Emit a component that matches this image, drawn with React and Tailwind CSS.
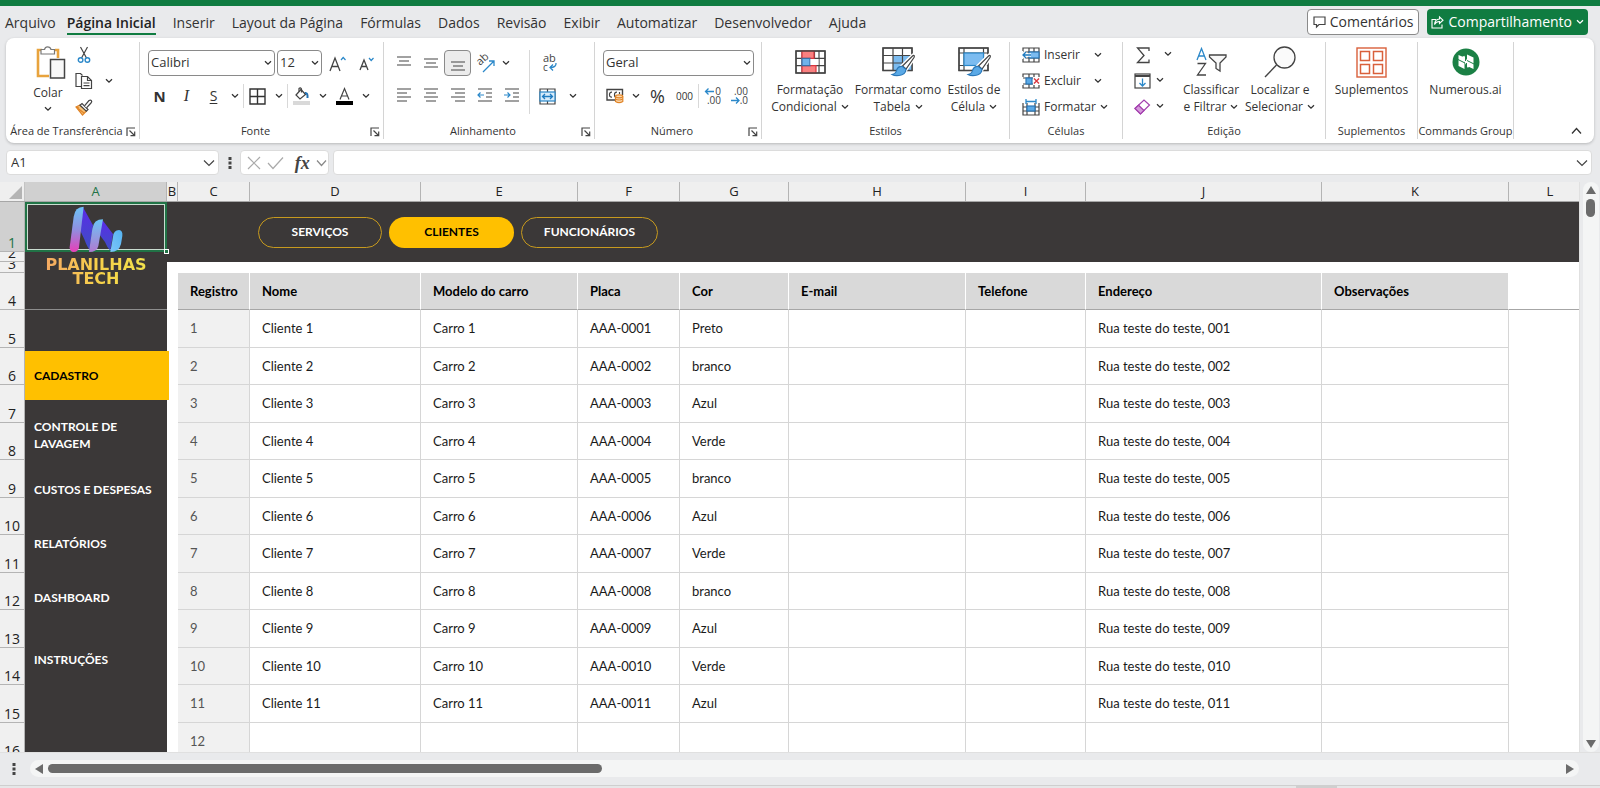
import React from "react";

const Svg = ({ w, h, vb, className = "", children }) => (
  <svg
    width={w}
    height={h}
    viewBox={vb || `0 0 ${w} ${h}`}
    fill="none"
    stroke="#444"
    strokeWidth="1.2"
    aria-hidden="true"
    className={"shrink-0 overflow-visible " + className}
  >
    {children}
  </svg>
);

const Chevron = ({ className = "" }) => (
  <Svg w={8} h={6} className={className}>
    <path d="M1 1.2 4 4.2 7 1.2" stroke="currentColor" strokeWidth="1.3" />
  </Svg>
);

const ChevronButton = ({ label, className = "" }) => (
  <button aria-label={label} className={"flex h-6 w-4 items-center justify-center " + className}>
    <Chevron />
  </button>
);

const Tool = ({ label, className = "", children }) => (
  <button aria-label={label} className={"flex h-[26px] w-[27px] shrink-0 items-center justify-center " + className}>
    {children}
  </button>
);

const Separator = ({ className = "h-6" }) => <span className={"w-px shrink-0 bg-[#d8d8d8] " + className} />;

/* ---------- icons ---------- */

const PasteIcon = () => (
  <Svg w={36} h={34}>
    <g transform="translate(6 0)">
      <path d="M6 4H2V30H13M19 4H22V12" stroke="#e8a33d" strokeWidth="2.6" />
      <path d="M5 8V3.500H8.500C9 1.500 10.200.8 11.500.8S14.500 1.500 15 3.500H18.500V8Z" fill="#fff" stroke="#777" />
      <rect x="14.500" y="13.500" width="14" height="18.500" fill="#f8f8f8" stroke="#444" strokeWidth="1.500" />
    </g>
  </Svg>
);

const CutIcon = () => (
  <Svg w={14} h={18}>
    <path d="M3.500 1 9.500 12M10.500 1 4.500 12" />
    <circle cx="3.600" cy="14" r="2.300" stroke="#2b88c9" strokeWidth="1.400" />
    <circle cx="10.400" cy="14" r="2.300" stroke="#2b88c9" strokeWidth="1.400" />
  </Svg>
);

const CopyIcon = () => (
  <Svg w={18} h={18}>
    <path d="M6 14.500H1V1.500H5.500L7.500 3.500" />
    <path d="M6.500 4.500H12.500L16.500 8.500V16.500H6.500Z" fill="#fff" />
    <path d="M12.500 4.500V8.500H16.500M8.500 11H14.500M8.500 13.700H14.500" />
  </Svg>
);

const BrushIcon = () => (
  <Svg w={18} h={17}>
    <path d="M1 8 5 6 11.500 12 7.500 16Z" fill="#f6c27a" stroke="#e08427" />
    <path d="M3 9.500 9 14M1 8l3 1" stroke="#e08427" />
    <path d="M5 6.200 7 4.500 13 10.500 11.300 12.200Z" fill="#fff" stroke="#444" />
    <path d="M9.500 6.800 14 1.500Q15.500.5 16.400 1.600T16 4L11.500 8.800" fill="#fff" stroke="#444" />
  </Svg>
);

const BordersIcon = () => (
  <Svg w={17} h={17}>
    <path d="M1 1H16V16H1ZM8.500 1V16M1 8.500H16" stroke="#333" strokeWidth="1.400" />
  </Svg>
);

const FillIcon = () => (
  <Svg w={17} h={18}>
    <path d="M3 8 8 2.500 12.500 7.500 7 12Z" />
    <path d="M6 4.500V1.500Q7.500 0 8.500 2V5.500" />
    <path d="M12 6Q15 5.500 14.500 11" stroke="#1f6fb2" strokeWidth="2" />
    <rect x="0" y="14" width="17" height="4" fill="#d9d9d9" stroke="none" />
  </Svg>
);

const HLines = ({ rows, stroke = "#444", children }) => (
  <Svg w={16} h={18}>
    {rows.map(([x1, x2, y]) => (
      <path key={y} d={`M${x1} ${y}H${x2}`} stroke={stroke} strokeWidth="1.200" />
    ))}
    {children}
  </Svg>
);

const OrientationIcon = () => (
  <Svg w={18} h={19}>
    <text x="0" y="0" fontSize="11" fontFamily="Open Sans, sans-serif" fill="#444" stroke="none" transform="translate(4 12) rotate(-42)">
      ab
    </text>
    <path d="M7 18 17.500 7.500M13 7H18V12" stroke="#2b88c9" strokeWidth="1.300" />
  </Svg>
);

const WrapIcon = () => (
  <Svg w={16} h={18}>
    <text x="1" y="8" fontSize="11" fontFamily="Open Sans, sans-serif" fill="#444" stroke="none">ab</text>
    <text x="1" y="16.500" fontSize="10" fontFamily="Open Sans, sans-serif" fill="#444" stroke="none">c</text>
    <path d="M14 9Q14.500 13.500 8 13.500M11 10.500 8 13.500 11 16.500" stroke="#2b88c9" strokeWidth="1.300" />
  </Svg>
);

const MergeIcon = () => (
  <Svg w={17} h={17}>
    <path d="M1 1H16V16H1ZM8.500 1V4M8.500 13V16" />
    <rect x="1" y="4" width="15" height="9" fill="#d8ecfa" stroke="#2b88c9" />
    <path d="M3.500 8.500H13.500M6 6 3.500 8.500 6 11M11 6 13.500 8.500 11 11" stroke="#1f7bc0" strokeWidth="1.300" />
  </Svg>
);

const CurrencyIcon = () => (
  <Svg w={18} h={16}>
    <path d="M10 12H1V1.500H16.500V7" strokeWidth="1.400" />
    <path d="M6 4.200Q3.500 4 3.500 6.700T6 9.200M11 4.200Q8.500 4 8.500 6.700T10 9.200M13.500 4V6" />
    <path d="M9.500 8.500V13.500Q13 15.800 16.800 13.500V8.500" fill="#fbd9b0" stroke="#e08427" />
    <ellipse cx="13.150" cy="8.300" rx="3.650" ry="1.500" fill="#fbd9b0" stroke="#e08427" />
    <path d="M9.500 11Q13 13 16.800 11" stroke="#e08427" />
  </Svg>
);

const DecimalIcon = ({ more }) => (
  <Svg w={17} h={18}>
    <text x="17" y="8" textAnchor="end" fontSize="10" fontFamily="Open Sans, sans-serif" fill="#444" stroke="none">
      {more ? "0" : ".00"}
    </text>
    <text x="17" y="17" textAnchor="end" fontSize="10" fontFamily="Open Sans, sans-serif" fill="#444" stroke="none">
      {more ? ".00" : ".0"}
    </text>
    {more ? (
      <path d="M10 4.500H1.500M4.500 1.500 1.500 4.500 4.500 7.500" stroke="#2b88c9" strokeWidth="1.300" />
    ) : (
      <path d="M0 13.500H8M5 10.500 8 13.500 5 16.500" stroke="#2b88c9" strokeWidth="1.300" />
    )}
  </Svg>
);

const ConditionalIcon = () => (
  <Svg w={31} h={24}>
    <rect x="1" y="1" width="29" height="22" fill="#fff" />
    <path d="M1 8.300H30M1 15.700H30M7 1V23M24 1V23M19.500 1V23" />
    <path d="M7 1H19V8.300H7ZM7 15.700H21V23H7Z" fill="#f98080" stroke="#d9363e" />
    <path d="M7 8.300H15V15.700H7Z" fill="#6fb3ea" stroke="#3b6fa5" />
    <rect x="15.500" y="9" width="8" height="6" fill="#fff" stroke="none" />
    <rect x="1" y="1" width="29" height="22" strokeWidth="1.400" />
  </Svg>
);

const PaintBrush = () => (
  <g>
    <path d="M31 8.500Q33 8 32 10.500L24 22 20.500 19Z" fill="#fff" stroke="#fff" strokeWidth="4" />
    <path d="M31 8.500Q33 8 32 10.500L24 22 20.500 19Z" fill="#fff" stroke="#444" />
    <path d="M20.500 19.500 24 22.300Q23.500 28 17 28.500 12.500 29 10 27.500 14 26.500 14.500 23.500 16 19 20.500 19.500Z" fill="#5aa9e6" stroke="#2b78b8" />
  </g>
);

const TableStyleIcon = () => (
  <Svg w={33} h={30}>
    <rect x="1" y="1" width="29" height="22.500" fill="#fff" />
    <path d="M11 8.500H30V23.500H11Z" fill="#7cbcf0" stroke="none" />
    <path d="M1 8.500H30M1 16H30M11 1V23.500M20.500 1V23.500" />
    <rect x="1" y="1" width="29" height="22.500" strokeWidth="1.400" />
    <PaintBrush />
  </Svg>
);

const CellStyleIcon = () => (
  <Svg w={33} h={30}>
    <rect x="1" y="1" width="29" height="22.500" fill="#fff" />
    <path d="M1 6H30M1 18.500H30M6 1V23.500M25.500 1V23.500" />
    <rect x="6" y="6" width="19.500" height="12.500" fill="#7cbcf0" stroke="#2b88c9" />
    <rect x="1" y="1" width="29" height="22.500" strokeWidth="1.400" />
    <PaintBrush />
  </Svg>
);

const InsertCellsIcon = () => (
  <Svg w={18} h={16}>
    <path d="M1 4V1H17V15H1V12M7 1V15M12 1V15M1 5H17M1 11H17" />
    <rect x="7" y="5" width="10" height="6" fill="#7cbcf0" stroke="#2b78b8" />
    <path d="M9 8H1M4 5 1 8 4 11" stroke="#fff" strokeWidth="3.500" />
    <path d="M9 8H1M4 5 1 8 4 11" stroke="#1f7bc0" strokeWidth="1.300" />
  </Svg>
);

const DeleteCellsIcon = () => (
  <Svg w={18} h={16}>
    <path d="M1 4V1H17V4M1 12V15H17V12M7 1V15M12 1V4M12 12V15M1 5H11M1 11H11" />
    <rect x="4" y="5" width="6" height="6" fill="#5aa9e6" stroke="#2b78b8" />
    <path d="M12 5.500 17 10.500M17 5.500 12 10.500" stroke="#d9363e" strokeWidth="1.400" />
  </Svg>
);

const FormatCellsIcon = () => (
  <Svg w={18} h={17}>
    <path d="M1 4V16H17V4M5 4V16M13 4V16M1 8H17M1 12H17" />
    <rect x="5" y="7" width="8" height="5" fill="#5aa9e6" stroke="#2b78b8" />
    <path d="M4 2.500H14M4 0V5M14 0V5" stroke="#2b88c9" strokeWidth="1.300" />
  </Svg>
);

const SumIcon = () => (
  <Svg w={14} h={17}>
    <path d="M13 4V1H1.500L8 8.500 1.500 15.500H13V12.500" strokeWidth="1.300" />
  </Svg>
);

const FillDownIcon = () => (
  <Svg w={17} h={16}>
    <rect x="1" y="1" width="15" height="14" />
    <path d="M1 3H16" strokeWidth="2" />
    <path d="M8.500 5.500V13M5.500 10 8.500 13 11.500 10" stroke="#2b88c9" strokeWidth="1.300" />
  </Svg>
);

const EraserIcon = () => (
  <Svg w={17} h={16}>
    <path d="M1 9.500 10 1 15.500 6 6.500 15Z" fill="#fff" stroke="#a33fae" strokeWidth="1.200" />
    <path d="M1 9.500 4.500 6.200 10 11.500 6.500 15Z" fill="#d59adb" stroke="#a33fae" strokeWidth="1.200" />
  </Svg>
);

const SortFilterIcon = () => (
  <Svg w={31} h={30}>
    <path d="M1 13 5.500 1.500 10 13M2.700 9H8.300" stroke="#2b88c9" strokeWidth="1.300" />
    <path d="M1.500 16.500H9.500L1.500 28H10" strokeWidth="1.300" />
    <path d="M13.500 8H30V10L24 16V24L20 21.500V16L13.500 10Z" fill="#f8f8f8" strokeWidth="1.300" />
  </Svg>
);

const FindIcon = () => (
  <Svg w={32} h={32}>
    <circle cx="20.500" cy="11.500" r="10.500" fill="#fafafa" strokeWidth="1.300" />
    <path d="M12.500 19 1 31" strokeWidth="1.400" />
  </Svg>
);

const AddinsIcon = () => (
  <Svg w={31} h={31}>
    <rect x="1" y="1" width="29" height="29" stroke="#d9603b" strokeWidth="1.400" />
    <path d="M4.500 4.500H13.500V13.500H4.500ZM17.500 4.500H26.500V13.500H17.500ZM4.500 17.500H13.500V26.500H4.500ZM17.500 17.500H26.500V26.500H17.500Z" stroke="#d9603b" strokeWidth="1.500" />
  </Svg>
);

const NumerousIcon = () => (
  <Svg w={28} h={28}>
    <circle cx="14" cy="14" r="13.500" fill="#1b8045" stroke="none" />
    <path d="M6.500 7 12.500 9.500V21L6.500 18ZM15 6.500 21.500 9.500V21L15 18Z" fill="#fff" stroke="none" />
    <path d="M11 8.500 17 19" stroke="#fff" strokeWidth="3" />
    <path d="M6 11.500 13 15M15 12.500 22 16" stroke="#1b8045" strokeWidth="1" />
    <path d="M13.500 8V13M14.500 15V20" stroke="#1b8045" strokeWidth="1" />
  </Svg>
);

const CommentIcon = () => (
  <Svg w={13} h={12}>
    <path d="M1 1H12V8.500H6L3.500 11V8.500H1Z" />
  </Svg>
);

const ShareIcon = () => (
  <Svg w={13} h={13}>
    <path d="M5 3.500H1V12H11V8.500" stroke="#fff" strokeWidth="1.100" />
    <path d="M8.500 1 12 4.200 8.500 7.400V5.500Q5 5.500 3.500 8.500 4 3.200 8.500 3Z" stroke="#fff" strokeWidth="1.100" />
  </Svg>
);

const LauncherIcon = () => (
  <Svg w={10} h={10}>
    <path d="M1 9V1H9M3.500 3.500 8.500 8.500M8.700 4.500V8.700H4.500" stroke="#444" strokeWidth="1.200" />
  </Svg>
);

const LogoMark = () => (
  <svg width="54" height="46" viewBox="0 0 162 138" aria-hidden="true">
    <defs>
      <linearGradient id="bar1" x1="0" y1="0" x2="0" y2="1">
        <stop offset="0" stopColor="#6cc4f7" />
        <stop offset="0.5" stopColor="#8f8fe0" />
        <stop offset="1" stopColor="#e83fb8" />
      </linearGradient>
      <linearGradient id="bar2" x1="0" y1="0" x2="0" y2="1">
        <stop offset="0" stopColor="#6cc4f7" />
        <stop offset="1" stopColor="#b07ad0" />
      </linearGradient>
      <linearGradient id="bar3" x1="1" y1="0" x2="0" y2="1">
        <stop offset="0" stopColor="#55b4f2" />
        <stop offset="1" stopColor="#7cc6fa" />
      </linearGradient>
      <linearGradient id="fold" x1="0" y1="0" x2="0" y2="1">
        <stop offset="0" stopColor="#5b2be8" />
        <stop offset="1" stopColor="#3d4fc4" />
      </linearGradient>
    </defs>
    <path d="M42 4 72 58 62 132Q54 122 46 100L34 74Z" fill="url(#fold)" />
    <path d="M100 42 132 84 124 134Q114 124 108 108L90 84Z" fill="url(#fold)" />
    <path d="M44 2Q18 2 14 32L2 124Q2 138 14 138 28 138 30 124Z" fill="url(#bar1)" />
    <path d="M102 40Q74 40 70 68L60 138Q84 138 88 120Z" fill="url(#bar2)" />
    <path d="M132 92Q134 72 150 72 162 74 160 90L156 114Q150 138 124 138Z" fill="url(#bar3)" />
  </svg>
);

/* ---------- ribbon ---------- */

const Group = ({ label, launcher, className = "", children }) => (
  <section aria-label={label} className={"my-1 flex shrink-0 flex-col border-r border-[#d4d4d4] " + className}>
    <div className="flex h-[81px] items-start">{children}</div>
    <div
      className={
        "relative flex h-4 items-center justify-center text-[11px] whitespace-nowrap text-[#333]" + (launcher ? " pr-3" : "")
      }
    >
      {label}
      {launcher && (
        <button aria-label={`Opções de ${label}`} className="absolute right-0 bottom-0 p-1 pr-[3px] pb-[2px] pl-0">
          <LauncherIcon />
        </button>
      )}
    </div>
  </section>
);

const BigButton = ({ icon, lines, chevron, className = "" }) => (
  <button className={"flex shrink-0 flex-col items-center pt-px " + className}>
    <span className="flex h-[38px] items-center justify-center">{icon}</span>
    {lines.map((line, i) => (
      <span key={line} className="flex h-[17px] items-center gap-1 text-xs whitespace-nowrap">
        {line}
        {chevron && i === lines.length - 1 && <Chevron />}
      </span>
    ))}
  </button>
);

const Combo = ({ label, value, className = "" }) => (
  <span className={"relative flex h-[26px] shrink-0 items-center rounded border border-[#8a8a8a] bg-white " + className}>
    <select aria-label={label} defaultValue={value} className="h-full w-full appearance-none bg-transparent pr-4 pl-[2px] text-[13px] outline-none">
      <option>{value}</option>
    </select>
    <Chevron className="pointer-events-none absolute right-[2px]" />
  </span>
);

const ClipboardGroup = () => (
  <Group label="Área de Transferência" launcher className="w-[134px]">
    <button className="ml-[20px] flex w-11 flex-col items-center pt-1">
      <PasteIcon />
      <span className="mt-1 text-xs leading-[17px]">Colar</span>
      <Chevron className="mt-[5px]" />
    </button>
    <div className="flex flex-col">
      <Tool label="Recortar"><CutIcon /></Tool>
      <div className="flex">
        <Tool label="Copiar"><CopyIcon /></Tool>
        <ChevronButton label="Opções de cópia" className="mt-px ml-1" />
      </div>
      <Tool label="Pincel de formatação"><BrushIcon /></Tool>
    </div>
  </Group>
);

const FontGroup = () => (
  <Group label="Fonte" launcher className="w-[244px]">
    <div className="flex flex-col gap-[7px] pt-2 pl-[6px]">
      <div className="flex items-center gap-[2px] pl-[2px]">
        <Combo label="Fonte" value="Calibri" className="w-[127px]" />
        <Combo label="Tamanho da fonte" value="12" className="w-[45px]" />
        <Tool label="Aumentar fonte">
          <Svg w={17} h={17}>
            <path d="M1 16 6 3 11 16M2.800 11.500H9.200" strokeWidth="1.300" />
            <path d="M12 5 14.200 2.500 16.500 5" stroke="#2b88c9" />
          </Svg>
        </Tool>
        <Tool label="Diminuir fonte">
          <Svg w={15} h={15}>
            <path d="M1 14 5 4 9 14M2.500 10.500H7.500" strokeWidth="1.300" />
            <path d="M10 2 12.200 4.500 14.500 2" stroke="#2b88c9" />
          </Svg>
        </Tool>
      </div>
      <div className="flex items-center">
        <Tool label="Negrito"><span className="text-[15px] font-bold">N</span></Tool>
        <Tool label="Itálico"><span className="font-['Liberation_Serif',serif] text-base italic">I</span></Tool>
        <Tool label="Sublinhado"><span className="text-sm underline underline-offset-2">S</span></Tool>
        <ChevronButton label="Opções de sublinhado" />
        <Separator />
        <Tool label="Bordas"><BordersIcon /></Tool>
        <ChevronButton label="Opções de borda" />
        <Separator />
        <Tool label="Cor de preenchimento"><FillIcon /></Tool>
        <ChevronButton label="Opções de preenchimento" />
        <Tool label="Cor da fonte">
          <Svg w={17} h={18}>
            <path d="M4 12.500 8.500 1.500 13 12.500M5.500 9H11.500" />
            <rect x="0" y="14" width="17" height="4" fill="#000" stroke="none" />
          </Svg>
        </Tool>
        <ChevronButton label="Opções de cor da fonte" />
      </div>
    </div>
  </Group>
);

const AlignGroup = () => (
  <Group label="Alinhamento" launcher className="w-[211px]">
    <div className="flex flex-col gap-[7px] pt-2 pl-[6px]">
      <div className="flex items-center">
        <Tool label="Alinhar em cima"><HLines rows={[[1, 15, 3], [3, 13, 7], [1, 15, 11]]} /></Tool>
        <Tool label="Alinhar no meio"><HLines rows={[[1, 15, 5], [3, 13, 9], [1, 15, 13]]} /></Tool>
        <Tool label="Alinhar embaixo" className="rounded border border-[#8a8a8a] bg-[#ececec]">
          <HLines rows={[[1, 15, 8], [3, 13, 12], [1, 15, 16]]} />
        </Tool>
        <Tool label="Orientação"><OrientationIcon /></Tool>
        <ChevronButton label="Opções de orientação" />
      </div>
      <div className="flex items-center">
        <Tool label="Alinhar à esquerda"><HLines rows={[[1, 15, 2], [1, 11, 6], [1, 15, 10], [1, 11, 14]]} /></Tool>
        <Tool label="Centralizar"><HLines rows={[[1, 15, 2], [3, 13, 6], [1, 15, 10], [3, 13, 14]]} /></Tool>
        <Tool label="Alinhar à direita"><HLines rows={[[1, 15, 2], [5, 15, 6], [1, 15, 10], [5, 15, 14]]} /></Tool>
        <Tool label="Diminuir recuo">
          <HLines rows={[[1, 15, 2], [9, 15, 6], [9, 15, 10], [1, 15, 14]]}>
            <path d="M7 8H1M3.500 5.500 1 8 3.500 10.500" stroke="#2b88c9" />
          </HLines>
        </Tool>
        <Tool label="Aumentar recuo">
          <HLines rows={[[1, 15, 2], [9, 15, 6], [9, 15, 10], [1, 15, 14]]}>
            <path d="M0 8H6M3.500 5.500 6 8 3.500 10.500" stroke="#2b88c9" />
          </HLines>
        </Tool>
      </div>
    </div>
    <Separator className="mt-2 ml-1 h-16" />
    <div className="flex flex-col gap-[7px] pt-2 pl-1">
      <Tool label="Quebrar texto" className="ml-[2px]"><WrapIcon /></Tool>
      <div className="flex items-center">
        <Tool label="Mesclar e centralizar"><MergeIcon /></Tool>
        <ChevronButton label="Opções de mesclagem" className="ml-1" />
      </div>
    </div>
  </Group>
);

const NumberGroup = () => (
  <Group label="Número" launcher className="w-[167px]">
    <div className="flex flex-col gap-[7px] pt-2 pl-[6px]">
      <Combo label="Formato de número" value="Geral" className="ml-[2px] w-[151px]" />
      <div className="flex items-center">
        <Tool label="Formato de contabilização"><CurrencyIcon /></Tool>
        <ChevronButton label="Opções de moeda" />
        <Tool label="Porcentagem"><span className="text-lg">%</span></Tool>
        <Tool label="Separador de milhares"><span className="text-[10px]">000</span></Tool>
        <Separator />
        <Tool label="Aumentar casas decimais"><DecimalIcon more /></Tool>
        <Tool label="Diminuir casas decimais"><DecimalIcon /></Tool>
      </div>
    </div>
  </Group>
);

const StylesGroup = () => (
  <Group label="Estilos" className="w-[248px]">
    <BigButton icon={<ConditionalIcon />} lines={["Formatação", "Condicional"]} chevron className="ml-1 w-[88px]" />
    <BigButton icon={<TableStyleIcon />} lines={["Formatar como", "Tabela"]} chevron className="w-[88px]" />
    <BigButton icon={<CellStyleIcon />} lines={["Estilos de", "Célula"]} chevron className="w-[64px]" />
  </Group>
);

const CellsGroup = () => (
  <Group label="Células" className="w-[113px]">
    <div className="flex flex-col pl-3">
      {[
        ["Inserir", <InsertCellsIcon />],
        ["Excluir", <DeleteCellsIcon />],
        ["Formatar", <FormatCellsIcon />],
      ].map(([label, icon]) => (
        <button key={label} className="flex h-[26px] w-[80px] items-center gap-1 text-xs">
          {icon}
          {label}
          <Chevron className="ml-auto" />
        </button>
      ))}
    </div>
  </Group>
);

const EditGroup = () => (
  <Group label="Edição" className="w-[203px]">
    <div className="flex w-[52px] flex-col pl-[6px]">
      {[
        ["AutoSoma", <SumIcon />, "ml-1"],
        ["Preencher", <FillDownIcon />, "-ml-1"],
        ["Limpar", <EraserIcon />, "-ml-1"],
      ].map(([label, icon, shift]) => (
        <div key={label} className="flex">
          <Tool label={label}>{icon}</Tool>
          <ChevronButton label={`Opções de ${label}`} className={shift} />
        </div>
      ))}
    </div>
    <BigButton icon={<SortFilterIcon />} lines={["Classificar", "e Filtrar"]} chevron className="w-[72px]" />
    <BigButton icon={<FindIcon />} lines={["Localizar e", "Selecionar"]} chevron className="w-[66px]" />
  </Group>
);

const Ribbon = () => (
  <div className="mx-[6px] flex h-[105px] shrink-0 overflow-hidden rounded-lg bg-white text-[#333] shadow-[0_1px_3px_rgba(0,0,0,0.22)]">
    <ClipboardGroup />
    <FontGroup />
    <AlignGroup />
    <NumberGroup />
    <StylesGroup />
    <CellsGroup />
    <EditGroup />
    <Group label="Suplementos" className="w-[92px]">
      <BigButton icon={<AddinsIcon />} lines={["Suplementos"]} className="w-full" />
    </Group>
    <Group label="Commands Group" className="w-[96px]">
      <BigButton icon={<NumerousIcon />} lines={["Numerous.ai"]} className="w-full" />
    </Group>
    <button aria-label="Recolher faixa de opções" className="mt-auto ml-auto p-3 pb-2">
      <Svg w={11} h={8}><path d="M1 6.500 5.500 1.500 10 6.500" stroke="#333" strokeWidth="1.300" /></Svg>
    </button>
  </div>
);

const TABS = ["Arquivo", "Página Inicial", "Inserir", "Layout da Página", "Fórmulas", "Dados", "Revisão", "Exibir", "Automatizar", "Desenvolvedor", "Ajuda"];

const TabBar = () => (
  <div className="flex h-8 shrink-0 items-center pr-3 pl-[5px] text-[#333]">
    <nav className="flex items-center gap-[17px] text-sm">
      {TABS.map((tab) => (
        <a
          key={tab}
          href="#"
          className={
            "pt-1 whitespace-nowrap " +
            (tab === "Página Inicial" ? "-ml-[6px] border-b-2 border-[#107c41] font-semibold text-[#222]" : "pb-[2px]")
          }
        >
          {tab}
        </a>
      ))}
    </nav>
    <div className="ml-auto flex items-center gap-2">
      <button className="flex h-[26px] items-center gap-1 rounded border border-[#8a8a8a] bg-white px-[5px] text-sm">
        <CommentIcon />
        Comentários
      </button>
      <button className="flex h-[26px] items-center gap-1 rounded bg-[#107c41] px-1 text-sm font-medium text-white">
        <ShareIcon />
        Compartilhamento
        <Chevron />
      </button>
    </div>
  </div>
);

const Dots = () => (
  <Svg w={4} h={12}>
    <path d="M.5 0H3.500V3H.5ZM.5 4.500H3.500V7.500H.5ZM.5 9H3.500V12H.5Z" fill="#444" stroke="none" />
  </Svg>
);

const FormulaBar = () => (
  <div className="mt-[7px] mr-2 mb-[7px] ml-[6px] flex h-[25px] shrink-0 items-stretch">
    <label className="flex w-[213px] items-center rounded border border-[#dcdcdc] bg-white pr-[3px]">
      <input aria-label="Caixa de nome" defaultValue="A1" className="w-full min-w-0 bg-transparent pl-1 text-[13px] text-[#333] outline-none" />
      <Svg w={12} h={8}><path d="M1 1.500 6 6.500 11 1.500" /></Svg>
    </label>
    <span className="flex w-[21px] items-center justify-center"><Dots /></span>
    <div className="flex w-[89px] items-center justify-between rounded border border-[#dcdcdc] bg-white pr-px pl-[6px]">
      <button aria-label="Cancelar"><Svg w={14} h={14}><path d="M1 1 13 13M13 1 1 13" stroke="#aaa" /></Svg></button>
      <button aria-label="Inserir"><Svg w={17} h={14}><path d="M1 7 6 12.500 16 1.500" stroke="#aaa" /></Svg></button>
      <button aria-label="Inserir função" className="pl-1 font-['Liberation_Serif',serif] text-lg leading-5 font-bold text-[#444] italic">fx</button>
      <button aria-label="Funções"><Svg w={11} h={8}><path d="M1 1.500 5.500 6.500 10 1.500" stroke="#888" /></Svg></button>
    </div>
    <label className="ml-1 flex flex-1 items-center rounded border border-[#dcdcdc] bg-white pr-[3px]">
      <input aria-label="Barra de fórmulas" className="w-full min-w-0 bg-transparent px-2 text-sm outline-none" />
      <Svg w={12} h={8}><path d="M1 1.500 6 6.500 11 1.500" /></Svg>
    </label>
  </div>
);

/* ---------- sheet ---------- */

const COLUMNS = [
  ["A", "w-[142px]"],
  ["B", "w-[11px]"],
  ["C", "w-[72px]"],
  ["D", "w-[171px]"],
  ["E", "w-[157px]"],
  ["F", "w-[102px]"],
  ["G", "w-[109px]"],
  ["H", "w-[177px]"],
  ["I", "w-[120px]"],
  ["J", "w-[236px]"],
  ["K", "w-[187px]"],
];

const FIELDS = ["Registro", "Nome", "Modelo do carro", "Placa", "Cor", "E-mail", "Telefone", "Endereço", "Observações"];

const COLORS = ["Preto", "branco", "Azul", "Verde", "branco", "Azul", "Verde", "branco", "Azul", "Verde", "Azul"];

const ROWS = COLORS.map((color, i) => {
  const n = i + 1;
  const code = String(n).padStart(3, "0");
  return [n, `Cliente ${n}`, `Carro ${n}`, `AAA-0${code}`, color, "", "", `Rua teste do teste, ${code}`, ""];
}).concat([[12, "", "", "", "", "", "", "", ""]]);

const ColumnHeaders = () => (
  <div className="flex h-5 shrink-0 border-b border-[#a6a6a6] bg-[#efefef] text-[13px] text-[#222]">
    <div className="flex w-[25px] shrink-0 items-end justify-end border-r border-[#c4c4c4] p-[2px]">
      <Svg w={13} h={13}><path d="M13 0V13H0Z" fill="#b4b4b4" stroke="none" /></Svg>
    </div>
    {COLUMNS.map(([name, width]) => (
      <div
        key={name}
        className={
          "flex shrink-0 items-center justify-center border-r border-[#b4b4b4] pt-px " +
          width +
          (name === "A" ? " bg-[#d0d0d0] text-[#217346]" : "")
        }
      >
        {name}
      </div>
    ))}
    <div className="flex min-w-0 flex-1 items-center justify-center pt-px pl-3">L</div>
  </div>
);

const rowHeight = (n) => {
  if (n === 1) return "h-[50px] bg-[#d0d0d0] text-[#217346]";
  if (n === 2) return "h-[10px]";
  if (n === 3) return "h-[11px]";
  if (n === 4) return "h-[37px]";
  return n % 2 ? "h-[38px]" : "h-[37px]";
};

const RowHeaders = () => (
  <div className="flex w-[25px] shrink-0 flex-col bg-[#f0f0f0] text-sm leading-4 text-[#222]">
    {Array.from({ length: 16 }, (_, i) => i + 1).map((n) => (
      <div
        key={n}
        className={"flex shrink-0 items-end justify-center overflow-hidden border-r border-b border-[#b4b4b4] " + rowHeight(n)}
      >
        {n}
      </div>
    ))}
  </div>
);

const SideBar = () => (
  <div className="flex w-[142px] shrink-0 flex-col bg-[#3b3838]">
    <div className="relative flex h-[108px] shrink-0 flex-col items-center border-b border-[#8c8c8c] pt-1">
      <span className="absolute inset-x-0 top-0 h-[50px] border-2 border-[#217346] outline-1 -outline-offset-3 outline-[#c9dcd0]" />
      <span className="absolute top-[47px] -right-[2px] size-[5px] border border-white bg-[#217346]" />
      <span className="relative"><LogoMark /></span>
      <span className="mt-[6px] bg-linear-to-r from-[#f4a862] via-[#f7d04a] to-[#f2e24c] bg-clip-text text-center font-['DejaVu_Sans',sans-serif] text-base leading-[14px] font-bold text-transparent">
        PLANILHAS
        <br />
        TECH
      </span>
    </div>
    <nav className="flex flex-col pt-[41px] font-['Lato',sans-serif] text-xs leading-[17px] font-bold text-white">
      <a href="#" className="relative -mr-[2px] flex h-[49px] items-center bg-[#ffc000] pl-[9px] text-black">CADASTRO</a>
      <a href="#" className="mt-2 flex h-[54px] items-center pr-8 pl-[9px]">CONTROLE DE LAVAGEM</a>
      <a href="#" className="flex h-[54px] items-center pl-[9px] whitespace-nowrap">CUSTOS E DESPESAS</a>
      <a href="#" className="flex h-[54px] items-center pl-[9px]">RELATÓRIOS</a>
      <a href="#" className="flex h-[54px] items-center pl-[9px]">DASHBOARD</a>
      <a href="#" className="mt-2 flex h-[54px] items-center pl-[9px]">INSTRUÇÕES</a>
    </nav>
  </div>
);

const TopNav = () => (
  <nav className="flex h-[60px] shrink-0 items-center gap-[7px] bg-[#3b3838] pl-[91px] font-['Lato',sans-serif] text-xs font-bold text-white">
    <a href="#" className="flex h-[31px] w-[124px] items-center justify-center rounded-full border border-[#c79a1e]">SERVIÇOS</a>
    <a href="#" className="flex h-[31px] w-[125px] items-center justify-center rounded-full bg-[#ffc000] text-black">CLIENTES</a>
    <a href="#" className="flex h-[31px] w-[137px] items-center justify-center rounded-full border border-[#c79a1e]">FUNCIONÁRIOS</a>
  </nav>
);

const DataTable = () => (
  <table className="ml-[11px] w-[1331px] table-fixed border-separate border-spacing-0 font-['Lato',sans-serif] text-[13px] text-[#1a1a1a]">
    <colgroup>
      {COLUMNS.slice(2).map(([name, width]) => (
        <col key={name} className={width} />
      ))}
    </colgroup>
    <thead>
      <tr className="h-[37px]">
        {FIELDS.map((field) => (
          <th key={field} scope="col" className="border-r border-b border-r-white border-b-[#a6a6a6] bg-[#d9d9d9] p-0 pt-px pl-3 text-left font-bold whitespace-nowrap text-black">
            {field}
          </th>
        ))}
      </tr>
    </thead>
    <tbody>
      {ROWS.map((row) => (
        <tr key={row[0]} className="h-[37px] odd:h-[38px]">
          {row.map((cell, i) => (
            <td key={i} className={"border-r border-b border-[#d6d6d6] p-0 pt-px pl-3 " + (i === 0 ? "bg-[#f1f1f1] text-[#555]" : "")}>
              {cell}
            </td>
          ))}
        </tr>
      ))}
    </tbody>
  </table>
);

const Sheet = () => (
  <div className="flex min-h-0 flex-1">
    <div className="flex min-w-0 flex-1 flex-col overflow-hidden">
      <ColumnHeaders />
      <div className="flex min-h-0 flex-1 overflow-hidden">
        <RowHeaders />
        <SideBar />
        <div className="min-w-0 flex-1 overflow-hidden bg-white">
          <TopNav />
          <div className="flex pt-[11px]">
            <DataTable />
            <div className="h-[37px] flex-1 border-b border-[#a6a6a6]" />
          </div>
        </div>
      </div>
    </div>
    <div className="flex w-[21px] shrink-0 flex-col items-center border-l border-[#e0e0e0] pl-px">
      <div className="flex w-4 flex-1 flex-col items-center rounded-full bg-[#f4f5f5] py-1">
        <Svg w={10} h={8}><path d="M5 0 10 8H0Z" fill="#6b6b6b" stroke="none" /></Svg>
        <span className="mt-[5px] h-[18px] w-[9px] rounded-full bg-[#6b6b6b]" />
        <Svg w={10} h={8} className="mt-auto"><path d="M5 8 10 0H0Z" fill="#6b6b6b" stroke="none" /></Svg>
      </div>
    </div>
  </div>
);

const HorizontalScroll = () => (
  <div className="flex h-9 shrink-0 flex-col border-t border-[#e0e0e0]">
    <div className="mt-[7px] mr-[21px] flex h-[17px] items-center pl-3">
      <Dots />
      <div className="ml-[14px] flex h-full flex-1 items-center rounded-full bg-[#f4f5f5] px-[5px]">
        <Svg w={8} h={10}><path d="M8 0V10L0 5Z" fill="#6b6b6b" stroke="none" /></Svg>
        <span className="ml-[5px] h-[9px] w-[36%] rounded-full bg-[#6b6b6b]" />
        <Svg w={8} h={10} className="ml-auto"><path d="M0 0V10L8 5Z" fill="#6b6b6b" stroke="none" /></Svg>
      </div>
    </div>
    <div className="mt-auto flex h-[3px] justify-end border-t border-[#cfcfcf] bg-[#e6e7e8]">
      <span className="mr-[263px] w-[41px] bg-[#cfcfcf]" />
    </div>
  </div>
);

export default function App() {
  return (
    <div className="flex h-screen flex-col overflow-hidden bg-[#e9eaec] font-['Open_Sans',sans-serif]">
      <div className="h-[6px] shrink-0 bg-[#107c41]" />
      <TabBar />
      <Ribbon />
      <FormulaBar />
      <Sheet />
      <HorizontalScroll />
    </div>
  );
}
